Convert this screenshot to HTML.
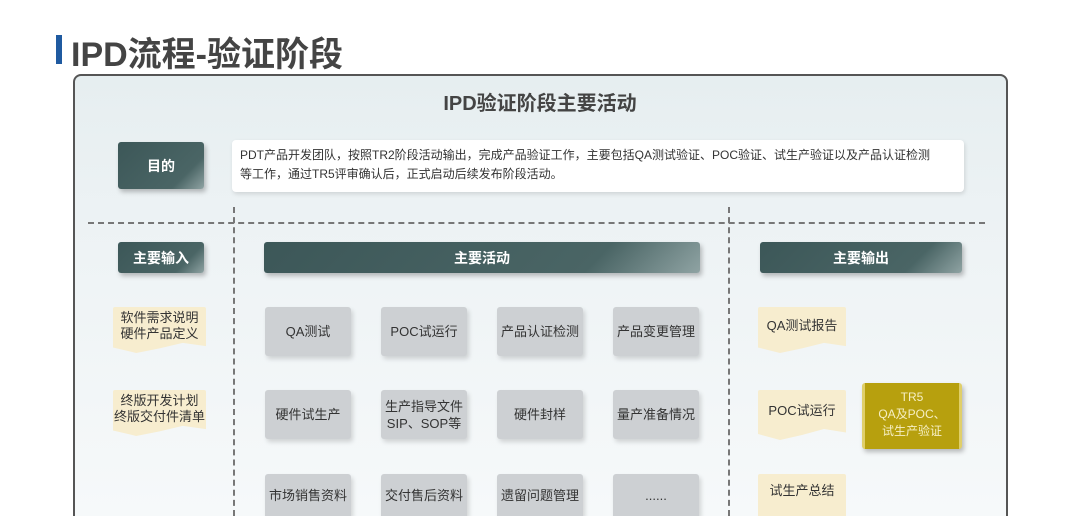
<!DOCTYPE html><html><head><meta charset="utf-8"><style>
*{margin:0;padding:0;box-sizing:border-box}
html,body{width:1080px;height:516px;overflow:hidden}
body{background:#fff;font-family:"Liberation Sans","Noto Sans CJK SC",sans-serif;position:relative}
.a{position:absolute}
.dk{background:linear-gradient(135deg,#3c5758 0%,#4a6565 75%,#8fa3a3 100%);color:#fff;font-weight:bold;font-size:14px;display:flex;align-items:center;justify-content:center;border-radius:3px;box-shadow:2px 3px 5px rgba(0,0,0,.25)}
.g{background:#cdd0d3;color:#333;font-size:13px;display:flex;align-items:center;justify-content:center;text-align:center;line-height:17px;border-radius:3px;box-shadow:2px 3px 5px rgba(0,0,0,.15);width:86px;height:49px}
.y{background:#f7edcf;color:#333;font-size:13px;display:flex;align-items:center;justify-content:center;text-align:center;line-height:16px;width:88px;height:46px;border-radius:2px 2px 0 0;padding-bottom:8px;clip-path:polygon(0 0,100% 0,100% 85%,75% 78%,50% 90%,25% 100%,0 88%)}
</style></head><body>
<div class="a" style="left:56px;top:35px;width:6px;height:29px;background:#1f5aa0"></div>
<div class="a" style="left:71px;top:27px;font-size:34px;font-weight:bold;color:#444">IPD流程-验证阶段</div>
<div class="a" style="left:73px;top:74px;width:935px;height:442px;border:2px solid #555;border-bottom:none;border-radius:8px 8px 0 0;background:linear-gradient(180deg,#e6eef0 0%,#eef3f5 40%,#f6f9fa 100%)"></div>
<div class="a" style="left:0;width:1080px;top:87px;text-align:center;font-size:20px;font-weight:bold;color:#444">IPD验证阶段主要活动</div>
<div class="a dk" style="left:118px;top:142px;width:86px;height:47px">目的</div>
<div class="a" style="left:232px;top:140px;width:732px;height:52px;background:#fff;border-radius:4px;box-shadow:1px 2px 4px rgba(0,0,0,.12);font-size:12px;color:#333;line-height:19px;padding:6px 24px 6px 8px">PDT产品开发团队，按照TR2阶段活动输出，完成产品验证工作，主要包括QA测试验证、POC验证、试生产验证以及产品认证检测等工作，通过TR5评审确认后，正式启动后续发布阶段活动。</div>
<div class="a" style="left:88px;top:222px;width:897px;border-top:2px dashed #777"></div>
<div class="a" style="left:233px;top:207px;height:309px;border-left:2px dashed #777"></div>
<div class="a" style="left:728px;top:207px;height:309px;border-left:2px dashed #777"></div>
<div class="a dk" style="left:118px;top:242px;width:86px;height:31px">主要输入</div>
<div class="a dk" style="left:264px;top:242px;width:436px;height:31px">主要活动</div>
<div class="a dk" style="left:760px;top:242px;width:202px;height:31px">主要输出</div>
<div class="a y" style="left:113px;top:307px;width:93px">软件需求说明<br>硬件产品定义</div>
<div class="a y" style="left:113px;top:390px;width:93px">终版开发计划<br>终版交付件清单</div>
<div class="a g" style="left:265px;top:307px">QA测试</div>
<div class="a g" style="left:381px;top:307px">POC试运行</div>
<div class="a g" style="left:497px;top:307px">产品认证检测</div>
<div class="a g" style="left:613px;top:307px">产品变更管理</div>
<div class="a g" style="left:265px;top:390px">硬件试生产</div>
<div class="a g" style="left:381px;top:390px">生产指导文件<br>SIP、SOP等</div>
<div class="a g" style="left:497px;top:390px">硬件封样</div>
<div class="a g" style="left:613px;top:390px">量产准备情况</div>
<div class="a g" style="left:265px;top:474px;height:42px;border-radius:3px 3px 0 0">市场销售资料</div>
<div class="a g" style="left:381px;top:474px;height:42px;border-radius:3px 3px 0 0">交付售后资料</div>
<div class="a g" style="left:497px;top:474px;height:42px;border-radius:3px 3px 0 0">遗留问题管理</div>
<div class="a g" style="left:613px;top:474px;height:42px;border-radius:3px 3px 0 0">......</div>
<div class="a y" style="left:758px;top:307px">QA测试报告</div>
<div class="a y" style="left:758px;top:390px;height:50px">POC试运行</div>
<div class="a y" style="left:758px;top:474px;height:42px;clip-path:none">试生产总结</div>
<div class="a" style="left:862px;top:383px;width:100px;height:66px;background:#b7a00e;border-radius:3px;box-shadow:2px 3px 5px rgba(0,0,0,.25);color:#f6efc4;font-size:12px;line-height:17px;text-align:center;padding-top:6px;border-left:3px solid #e0cf6a;border-right:3px solid #e0cf6a">TR5<br>QA及POC、<br>试生产验证</div>
</body></html>
